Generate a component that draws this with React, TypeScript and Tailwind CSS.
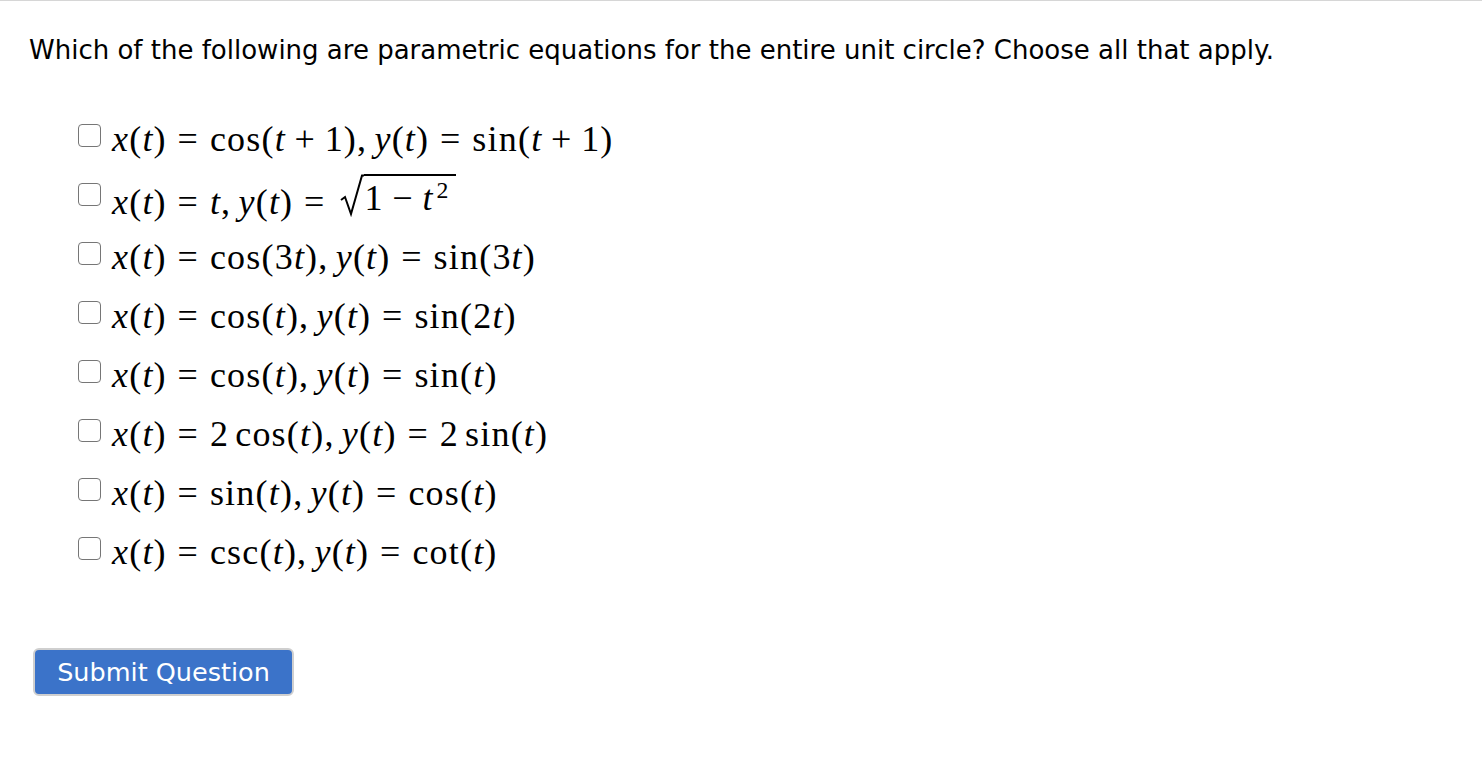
import React from "react";

const I = ({ children }: { children: React.ReactNode }) => (
  <span className="italic">{children}</span>
);
const Eq = () => <span className="mx-[0.3em]">=</span>;
const Op = ({ c }: { c: string }) => <span className="mx-[0.24em]">{c}</span>;
const Comma = () => <span className="mr-[0.2em]">,</span>;
const Xt = () => (
  <>
    <I>x</I>(<I>t</I>)
  </>
);
const Yt = () => (
  <>
    <I>y</I>(<I>t</I>)
  </>
);

const Sqrt = () => (
  <span className="inline-flex items-start relative top-[3px] ml-[4px]">
    <svg width="24" height="43" viewBox="0 0 24 43" className="shrink-0">
      <path d="M1 26 L5 23 L11 40 L22 1.5 L24 1.5" fill="none" stroke="#000" strokeWidth="2" />
    </svg>
    <span className="border-t-[2px] border-black leading-[1.1] pt-[3px] pr-[6px]">
      1<Op c="−" />
      <I>t</I>
      <span className="text-[0.66em] relative top-[-0.5em] ml-[3px]">2</span>
    </span>
  </span>
);

const rows: React.ReactNode[] = [
  <>
    <Xt /><Eq />cos(<I>t</I><Op c="+" />1)<Comma /><Yt /><Eq />sin(<I>t</I><Op c="+" />1)
  </>,
  <>
    <Xt /><Eq /><I>t</I><Comma /><Yt /><Eq /><Sqrt />
  </>,
  <>
    <Xt /><Eq />cos(3<I>t</I>)<Comma /><Yt /><Eq />sin(3<I>t</I>)
  </>,
  <>
    <Xt /><Eq />cos(<I>t</I>)<Comma /><Yt /><Eq />sin(2<I>t</I>)
  </>,
  <>
    <Xt /><Eq />cos(<I>t</I>)<Comma /><Yt /><Eq />sin(<I>t</I>)
  </>,
  <>
    <Xt /><Eq />2<span className="ml-[0.17em]">cos</span>(<I>t</I>)<Comma /><Yt /><Eq />2<span className="ml-[0.17em]">sin</span>(<I>t</I>)
  </>,
  <>
    <Xt /><Eq />sin(<I>t</I>)<Comma /><Yt /><Eq />cos(<I>t</I>)
  </>,
  <>
    <Xt /><Eq />csc(<I>t</I>)<Comma /><Yt /><Eq />cot(<I>t</I>)
  </>,
];

export default function App() {
  return (
    <div className="min-h-[764px] bg-white border-t border-[#d6d6d6]">
      <div className="pl-[29px] pt-[33px]">
        <p
          className="text-[26px] leading-[32px] text-black"
          style={{ fontFamily: "'DejaVu Sans', sans-serif" }}
        >
          Which of the following are parametric equations for the entire unit circle? Choose all that apply.
        </p>
        <div className="mt-[43px] pl-[49px] flex flex-col">
          {rows.map((r, i) => (
            <label key={i} className="h-[59px] flex items-center">
              <span className="w-[23px] h-[23px] rounded-[4px] border-[1.5px] border-[#767676] bg-white shrink-0 mb-[7px]" />
              <span
                className="ml-[11px] text-[36px] leading-[44px] tracking-[1.2px] text-black whitespace-nowrap"
                style={{ fontFamily: "'Liberation Serif', serif" }}
              >
                {r}
              </span>
            </label>
          ))}
        </div>
        <div className="mt-[67px] pl-[4px]">
          <button
            className="w-[261px] h-[48px] rounded-[6px] bg-[#3b73c9] border-2 border-[#cfcfcf] text-white text-[25.5px]"
            style={{ fontFamily: "'DejaVu Sans', sans-serif" }}
          >
            Submit Question
          </button>
        </div>
      </div>
    </div>
  );
}
